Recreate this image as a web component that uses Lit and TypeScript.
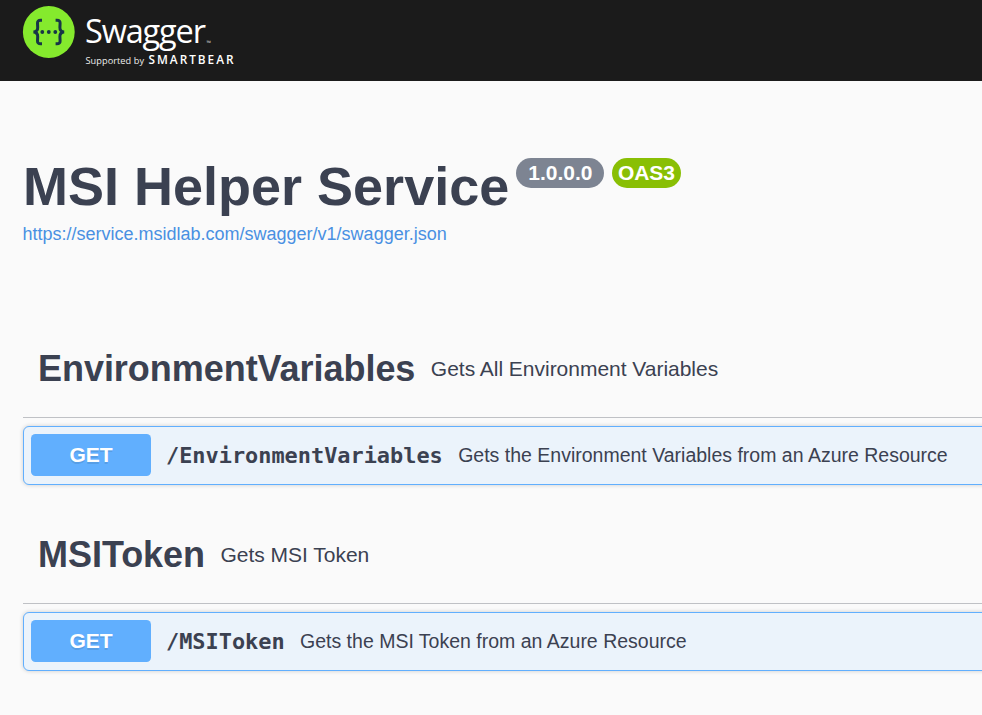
import { LitElement, html, css } from "lit";
import { customElement, property } from "lit/decorators.js";

@customElement("swagger-logo")
class SwaggerLogo extends LitElement {
  static styles = css`
    :host { display: block; width: 240px; height: 70px; }
    svg { display: block; }
    .name { font: 400 32.5px "Open Sans", sans-serif; fill: #fff; }
    .by { font: 400 9.2px "Open Sans", sans-serif; fill: #eee; }
    .brand { font: 600 11.8px "Open Sans", sans-serif; fill: #fff; }
    .tm { font: 400 6px "Open Sans", sans-serif; fill: #ccc; }
  `;
  render() {
    return html`<svg width="240" height="70" viewBox="0 0 240 70">
      <circle cx="48.8" cy="32" r="25.9" fill="#85ea2d" />
      <g fill="none" stroke="#173647" stroke-width="3">
        <path d="M42 20.2h-1.4c-2.2 0-3.2 1-3.1 3.1l.2 4.1c.1 2.6-.9 4.300-4.200 4.600c3.300.3 4.300 2 4.200 4.600l-.2 4.100c-.1 2.100.9 3.100 3.100 3.100h1.400" />
        <path d="M55.600 20.200h1.400c2.200 0 3.200 1 3.100 3.100l-.2 4.100c-.1 2.600.9 4.300 4.200 4.600c-3.300.3-4.300 2-4.200 4.600l.2 4.100c.1 2.100-.9 3.100-3.100 3.100h-1.400" />
      </g>
      <g fill="#173647">
        <circle cx="42.300" cy="32" r="1.900" /><circle cx="48.800" cy="32" r="1.900" /><circle cx="55.300" cy="32" r="1.900" />
      </g>
      <text class="name" x="85" y="42.600" textLength="121">Swagger</text>
      <text class="tm" x="206.500" y="45" textLength="5.500">™</text>
      <text class="by" x="85.500" y="63.500" textLength="58.500">Supported by</text>
      <text class="brand" x="148.500" y="63.600" textLength="85">SMARTBEAR</text>
    </svg>`;
  }
}

@customElement("api-section")
class ApiSection extends LitElement {
  @property() name = "";
  @property() summary = "";
  @property() path = "";
  @property() description = "";
  static styles = css`
    :host { display: block; height: 186px; color: #3b4151; white-space: nowrap; }
    .tag { display: flex; align-items: center; box-sizing: border-box; height: 98px; padding: 0 15px; border-bottom: 1px solid #bfc1c5; }
    .name { font-size: 36px; font-weight: 700; line-height: 42px; letter-spacing: -0.04px; }
    .summary { font-size: 21px; margin-left: 15.500px; line-height: 24px; letter-spacing: -0.02px; }
    .op { display: flex; align-items: center; box-sizing: border-box; height: 59px; margin-top: 8px; padding: 0 7px; border: 1px solid #61affe; border-radius: 6px; background: #ebf3fb; box-shadow: 0 0 4.500px rgba(0, 0, 0, 0.19); }
    .method { width: 120px; height: 42px; margin-top: -2px; flex: none; border-radius: 4.500px; background: #61affe; color: #fff; font-size: 21px; font-weight: 700; line-height: 42px; text-align: center; text-shadow: 0 1.500px 0 rgba(0, 0, 0, 0.1); }
    .path { margin-left: 15px; font: 700 21.900px/28px "DejaVu Sans Mono", monospace; }
    .desc { margin: -2px 0 0 15.400px; font-size: 19.500px; line-height: 24px; }
  `;
  render() {
    return html`
      <div class="tag"><span class="name">${this.name}</span><span class="summary">${this.summary}</span></div>
      <div class="op">
        <span class="method">GET</span><span class="path">${this.path}</span><span class="desc">${this.description}</span>
      </div>`;
  }
}

@customElement("app-root")
class AppRoot extends LitElement {
  static styles = css`
    :host { display: block; height: 715px; overflow: hidden; background: #fafafa; font-family: "Liberation Sans", Arial, sans-serif; color: #3b4151; }
    header { height: 81px; background: #1b1b1b; }
    main { width: 1100px; padding: 77px 0 0 23px; }
    .info { height: 162px; }
    .title { display: flex; align-items: flex-start; height: 64px; }
    h1 { margin: -3px 7px 0 0; font-size: 54px; line-height: 62px; font-weight: 700; white-space: nowrap; }
    .badge { height: 30px; box-sizing: border-box; margin-right: 8px; padding: 0 12px; border-radius: 15px; background: #7d8492; color: #fff; font-size: 21px; font-weight: 700; line-height: 30px; }
    .oas { padding: 0 6px 0 5.500px; letter-spacing: -0.1px; background: #89bf04; }
    a { display: block; margin-left: -0.5px; font-size: 18px; line-height: 24px; color: #4990e2; text-decoration: none; }
  `;
  render() {
    return html`
      <header><swagger-logo></swagger-logo></header>
      <main>
        <div class="info">
          <div class="title"><h1>MSI Helper Service</h1><span class="badge">1.0.0.0</span><span class="badge oas">OAS3</span></div>
          <a href="#">https://service.msidlab.com/swagger/v1/swagger.json</a>
        </div>
        <api-section name="EnvironmentVariables" summary="Gets All Environment Variables" path="/EnvironmentVariables" description="Gets the Environment Variables from an Azure Resource"></api-section>
        <api-section name="MSIToken" summary="Gets MSI Token" path="/MSIToken" description="Gets the MSI Token from an Azure Resource"></api-section>
      </main>`;
  }
}
